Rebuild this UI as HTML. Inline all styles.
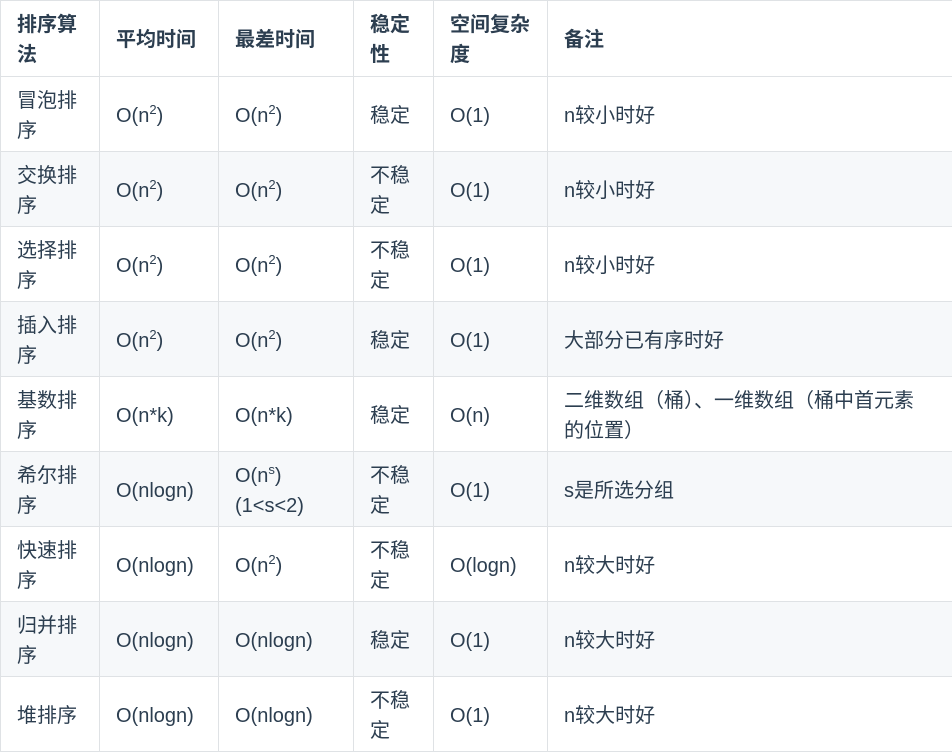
<!DOCTYPE html>
<html><head><meta charset="utf-8"><style>
body{margin:0;background:#fff;}
table{border-collapse:collapse;position:absolute;left:0;top:0;table-layout:fixed;width:953px;
font-family:"Liberation Sans","Noto Sans CJK SC",sans-serif;font-size:20px;color:#2c3e50;}
td,th{border:1px solid #dfe2e5;padding:3px 16px 0 16px;line-height:30px;text-align:left;vertical-align:middle;overflow:hidden}
th{font-weight:bold;height:72px}
td{height:71px}
td:last-child{padding-right:30px}
tr:nth-child(odd) td{background:#f6f8fa}
.s{display:inline-block;font-size:13px;line-height:13px;position:relative;top:-8px;vertical-align:baseline}
</style></head><body>
<table>
<colgroup><col style="width:99px"><col style="width:119px"><col style="width:135px"><col style="width:80px"><col style="width:114px"><col style="width:406px"></colgroup>
<tr><th>排序算法</th><th>平均时间</th><th>最差时间</th><th>稳定性</th><th>空间复杂度</th><th>备注</th></tr>
<tr><td>冒泡排序</td><td>O(n<span class="s">2</span>)</td><td>O(n<span class="s">2</span>)</td><td>稳定</td><td>O(1)</td><td>n较小时好</td></tr>
<tr><td>交换排序</td><td>O(n<span class="s">2</span>)</td><td>O(n<span class="s">2</span>)</td><td>不稳定</td><td>O(1)</td><td>n较小时好</td></tr>
<tr><td>选择排序</td><td>O(n<span class="s">2</span>)</td><td>O(n<span class="s">2</span>)</td><td>不稳定</td><td>O(1)</td><td>n较小时好</td></tr>
<tr><td>插入排序</td><td>O(n<span class="s">2</span>)</td><td>O(n<span class="s">2</span>)</td><td>稳定</td><td>O(1)</td><td>大部分已有序时好</td></tr>
<tr><td>基数排序</td><td>O(n*k)</td><td>O(n*k)</td><td>稳定</td><td>O(n)</td><td>二维数组（桶）、一维数组（桶中首元素<br>的位置）</td></tr>
<tr><td>希尔排序</td><td>O(nlogn)</td><td>O(n<span class="s">s</span>) (1&lt;s&lt;2)</td><td>不稳定</td><td>O(1)</td><td>s是所选分组</td></tr>
<tr><td>快速排序</td><td>O(nlogn)</td><td>O(n<span class="s">2</span>)</td><td>不稳定</td><td>O(logn)</td><td>n较大时好</td></tr>
<tr><td>归并排序</td><td>O(nlogn)</td><td>O(nlogn)</td><td>稳定</td><td>O(1)</td><td>n较大时好</td></tr>
<tr><td>堆排序</td><td>O(nlogn)</td><td>O(nlogn)</td><td>不稳定</td><td>O(1)</td><td>n较大时好</td></tr>
</table>
</body></html>
